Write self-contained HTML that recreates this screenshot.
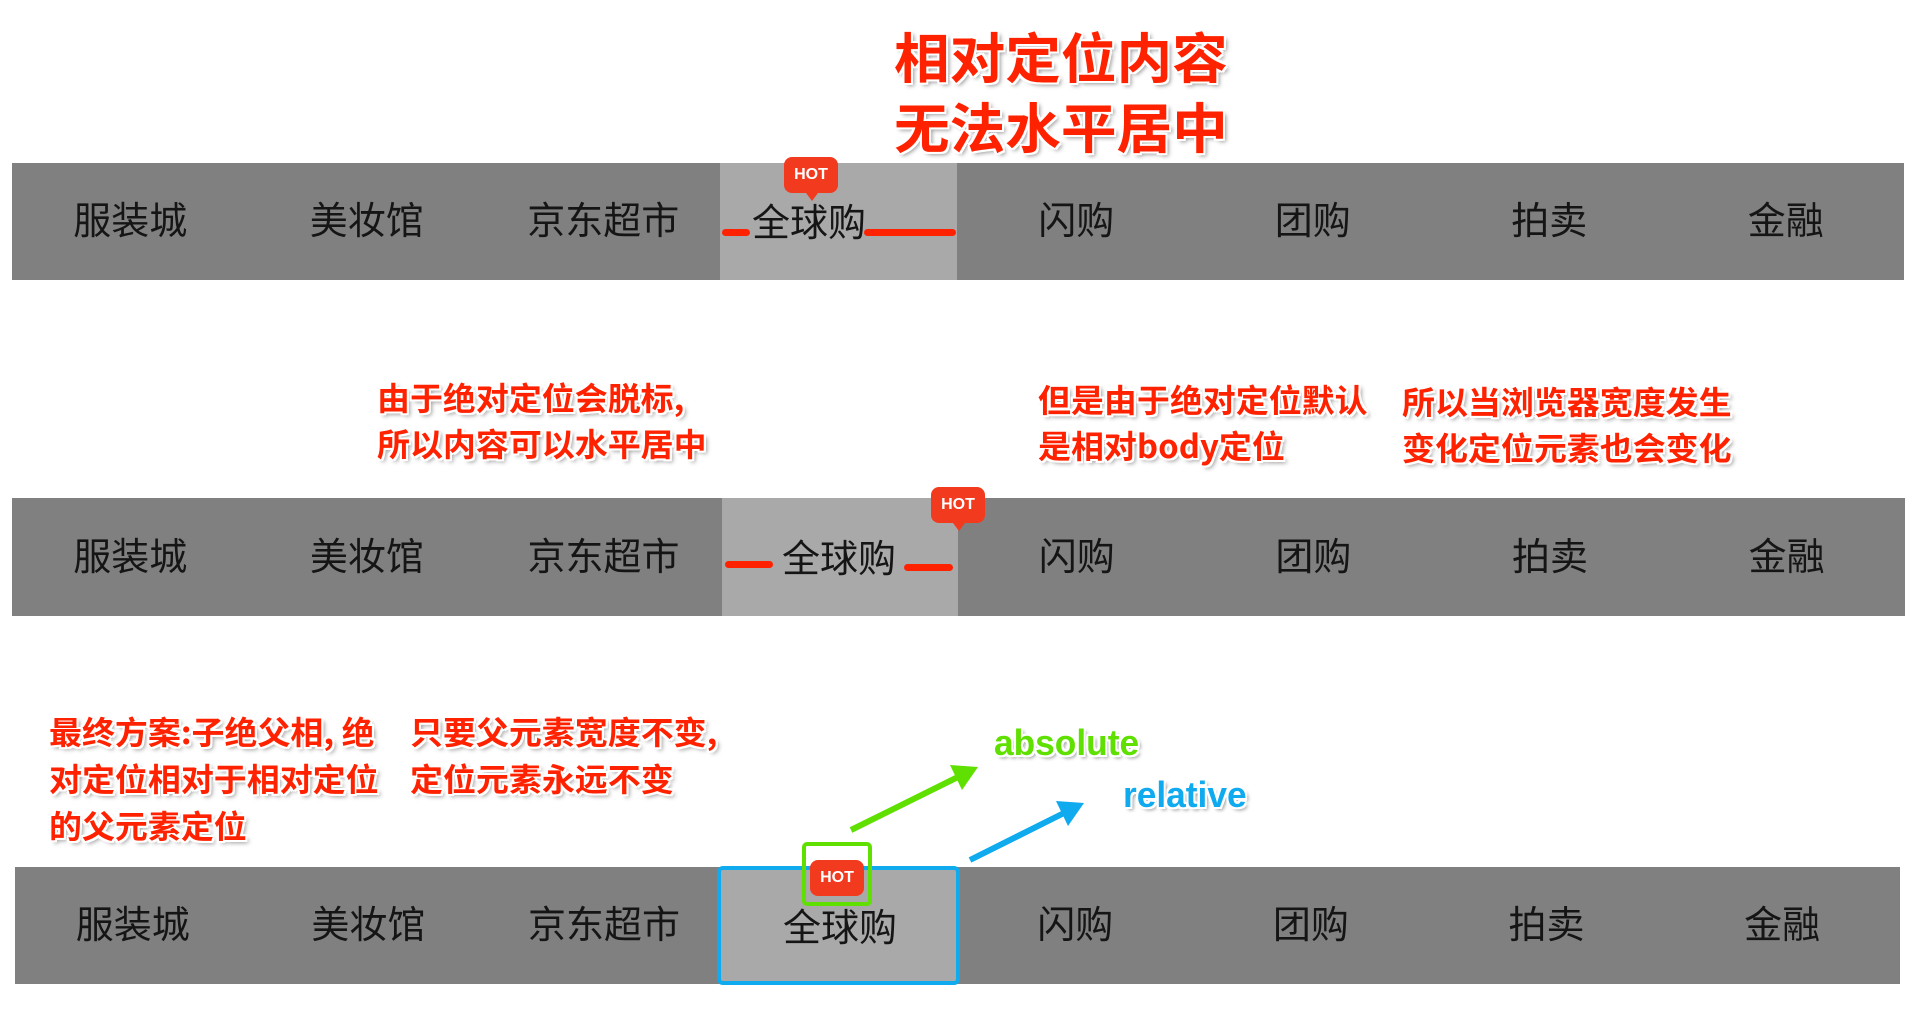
<!DOCTYPE html>
<html><head><meta charset="utf-8"><style>
body{margin:0;width:1920px;height:1015px;background:#fff;position:relative;overflow:hidden;font-family:"Liberation Sans","Noto Sans CJK SC",sans-serif}
.bar{position:absolute;background:#808080;display:flex}
.bar div{flex:1;display:flex;align-items:center;justify-content:center;font-size:38px;color:#151515;padding-bottom:8px}
.hl{position:absolute;background:#a9a9a9}
.t{position:absolute;font-family:"Noto Sans CJK SC",sans-serif;font-weight:bold;color:#ff2200;white-space:nowrap;
text-shadow:2px 0 #fff,-2px 0 #fff,0 2px #fff,0 -2px #fff,2px 2px #fff,-2px -2px #fff,2px -2px #fff,-2px 2px #fff,3px 3px 4px #999;transform:scaleX(1.03);transform-origin:left top}
.hot{position:absolute;width:54px;height:36px;background:#f23a1e;border-radius:8px;color:#fff;font-size:16px;font-weight:bold;display:flex;align-items:center;justify-content:center}
.hot:after{content:"";position:absolute;left:22px;bottom:-8px;border:6px solid transparent;border-top:8px solid #f23a1e;border-bottom:0}
.dash{position:absolute;height:7px;background:#ff2200;border-radius:4px}
.it{position:absolute;font-size:38px;color:#151515}
</style></head><body>
<div class="t" style="left:894px;top:20px;font-size:54px;line-height:70px">相对定位内容<br>无法水平居中</div>

<div class="bar" style="left:12px;top:163px;width:1892px;height:117px"><div>服装城</div><div>美妆馆</div><div>京东超市</div><div></div><div>闪购</div><div>团购</div><div>拍卖</div><div>金融</div></div>
<div class="hl" style="left:720px;top:163px;width:237px;height:117px"></div>
<div class="it" style="left:752px;top:192px">全球购</div>
<div class="dash" style="left:722px;top:229px;width:28px"></div>
<div class="dash" style="left:864px;top:229px;width:92px"></div>
<div class="hot" style="left:784px;top:157px">HOT</div>

<div class="t" style="left:377px;top:374px;font-size:32px;line-height:46px">由于绝对定位会脱标,<br>所以内容可以水平居中</div>
<div class="t" style="left:1038px;top:376px;font-size:32px;line-height:46px">但是由于绝对定位默认<br>是相对body定位</div>
<div class="t" style="left:1402px;top:378px;font-size:32px;line-height:46px">所以当浏览器宽度发生<br>变化定位元素也会变化</div>

<div class="bar" style="left:12px;top:498px;width:1893px;height:118px"><div>服装城</div><div>美妆馆</div><div>京东超市</div><div></div><div>闪购</div><div>团购</div><div>拍卖</div><div>金融</div></div>
<div class="hl" style="left:722px;top:498px;width:236px;height:118px"></div>
<div class="it" style="left:782px;top:528px">全球购</div>
<div class="dash" style="left:725px;top:561px;width:48px"></div>
<div class="dash" style="left:904px;top:564px;width:49px"></div>
<div class="hot" style="left:931px;top:487px">HOT</div>

<div class="t" style="left:49px;top:708px;font-size:32px;line-height:47px">最终方案:子绝父相, 绝<br>对定位相对于相对定位<br>的父元素定位</div>
<div class="t" style="left:410px;top:708px;font-size:32px;line-height:47px">只要父元素宽度不变,<br>定位元素永远不变</div>
<div class="t" style="left:994px;top:722px;font-size:36px;color:#5fe000;font-family:'Liberation Sans',sans-serif;transform:scaleX(0.98)">absolute</div>
<div class="t" style="left:1123px;top:774px;font-size:36px;color:#10aaee;font-family:'Liberation Sans',sans-serif;transform:scaleX(0.98)">relative</div>
<svg style="position:absolute;left:0;top:0" width="1920" height="1015">
<line x1="851" y1="830" x2="962" y2="775" stroke="#5fe000" stroke-width="6"/>
<polygon points="978,767 950,765 962,790" fill="#5fe000"/>
<line x1="970" y1="860" x2="1070" y2="810" stroke="#10aaee" stroke-width="6"/>
<polygon points="1084,803 1056,801 1068,826" fill="#10aaee"/>
</svg>

<div class="bar" style="left:15px;top:867px;width:1885px;height:117px"><div>服装城</div><div>美妆馆</div><div>京东超市</div><div></div><div>闪购</div><div>团购</div><div>拍卖</div><div>金融</div></div>
<div class="hl" style="left:717px;top:866px;width:243px;height:119px;border:4px solid #10aaee;border-radius:6px;box-sizing:border-box"></div>
<div class="it" style="left:783px;top:897px">全球购</div>
<div class="hot" style="left:810px;top:860px;overflow:hidden">HOT</div>
<div style="position:absolute;left:802px;top:842px;width:70px;height:64px;border:4px solid #5fe000;border-radius:5px;box-sizing:border-box"></div>
</body></html>
